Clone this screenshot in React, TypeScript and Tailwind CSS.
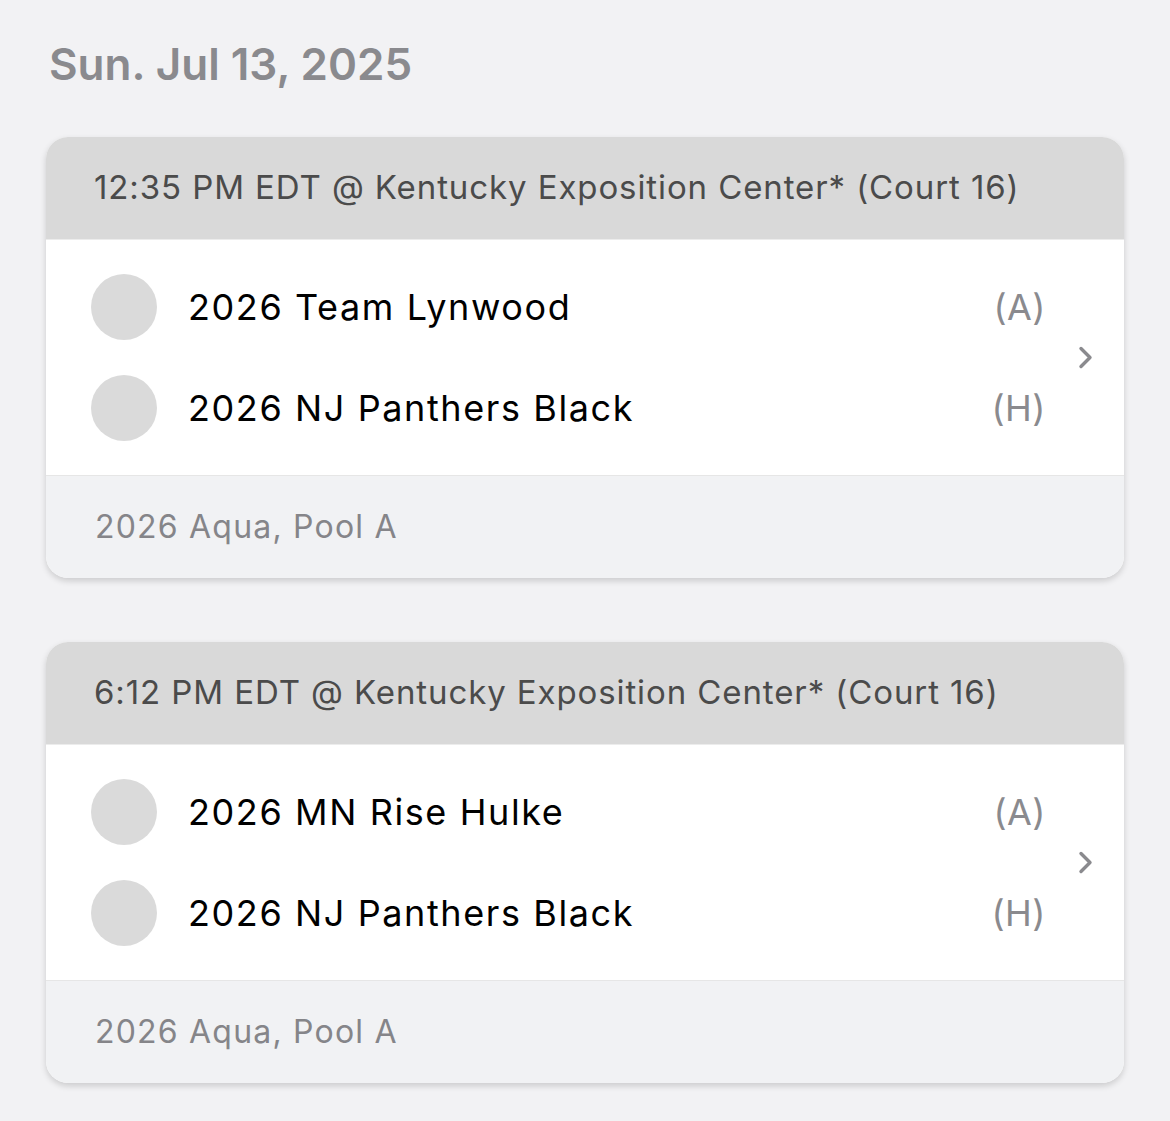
import React from "react";

const font = { fontFamily: "Inter, 'Noto Sans', sans-serif" };

function Chevron() {
  return (
    <svg width="20" height="28" viewBox="0 0 20 28" fill="none">
      <path d="M5 4.5 L14 13.5 L5 22.5" stroke="#8a8a8e" strokeWidth="3.4" strokeLinecap="round" strokeLinejoin="round" />
    </svg>
  );
}

type Game = { time: string; teams: { name: string; side: string }[]; pool: string };

const games: Game[] = [
  {
    time: "12:35 PM EDT @ Kentucky Exposition Center* (Court 16)",
    teams: [
      { name: "2026 Team Lynwood", side: "(A)" },
      { name: "2026 NJ Panthers Black", side: "(H)" },
    ],
    pool: "2026 Aqua, Pool A",
  },
  {
    time: "6:12 PM EDT @ Kentucky Exposition Center* (Court 16)",
    teams: [
      { name: "2026 MN Rise Hulke", side: "(A)" },
      { name: "2026 NJ Panthers Black", side: "(H)" },
    ],
    pool: "2026 Aqua, Pool A",
  },
];

function Card({ g }: { g: Game }) {
  return (
    <div className="rounded-[22px] overflow-hidden bg-white shadow-[0_3px_6px_rgba(0,0,0,0.16)]">
      <div className="h-[103px] bg-[#d9d9d9] border-b border-[#ececec] flex items-center pl-[48px] text-[33px] text-[#4b4b4b] tracking-[0.9px]">
        {g.time}
      </div>
      <div className="flex items-center pl-[45px] pr-[28px] py-[34px] bg-white">
        <div className="flex-1 flex flex-col gap-[35px]">
          {g.teams.map((t, i) => (
            <div key={i} className="flex items-center h-[66px]">
              <div className="w-[66px] h-[66px] rounded-full bg-[#dadada] shrink-0" />
              <div className="ml-[31px] flex-1 text-[36px] text-black tracking-[1.6px]">{t.name}</div>
              <div className="text-[36px] text-[#8a8a8e] tracking-[0.5px]">{t.side}</div>
            </div>
          ))}
        </div>
        <div className="w-[50px] flex justify-end">
          <Chevron />
        </div>
      </div>
      <div className="h-[103px] bg-[#f1f2f4] border-t border-[#e6e6e6] flex items-center pl-[49px] text-[32px] text-[#858589] tracking-[1.2px]">
        {g.pool}
      </div>
    </div>
  );
}

export default function App() {
  return (
    <div className="min-h-[1121px] bg-[#f2f2f4] px-[46px] pt-[36px] pb-[40px]" style={font}>
      <h1 className="pl-[3px] text-[44px] font-semibold text-[#8a8a8e] leading-[56px]">
        Sun. Jul 13, 2025
      </h1>
      <div className="mt-[45px] flex flex-col gap-[64px]">
        {games.map((g, i) => (
          <Card key={i} g={g} />
        ))}
      </div>
    </div>
  );
}
